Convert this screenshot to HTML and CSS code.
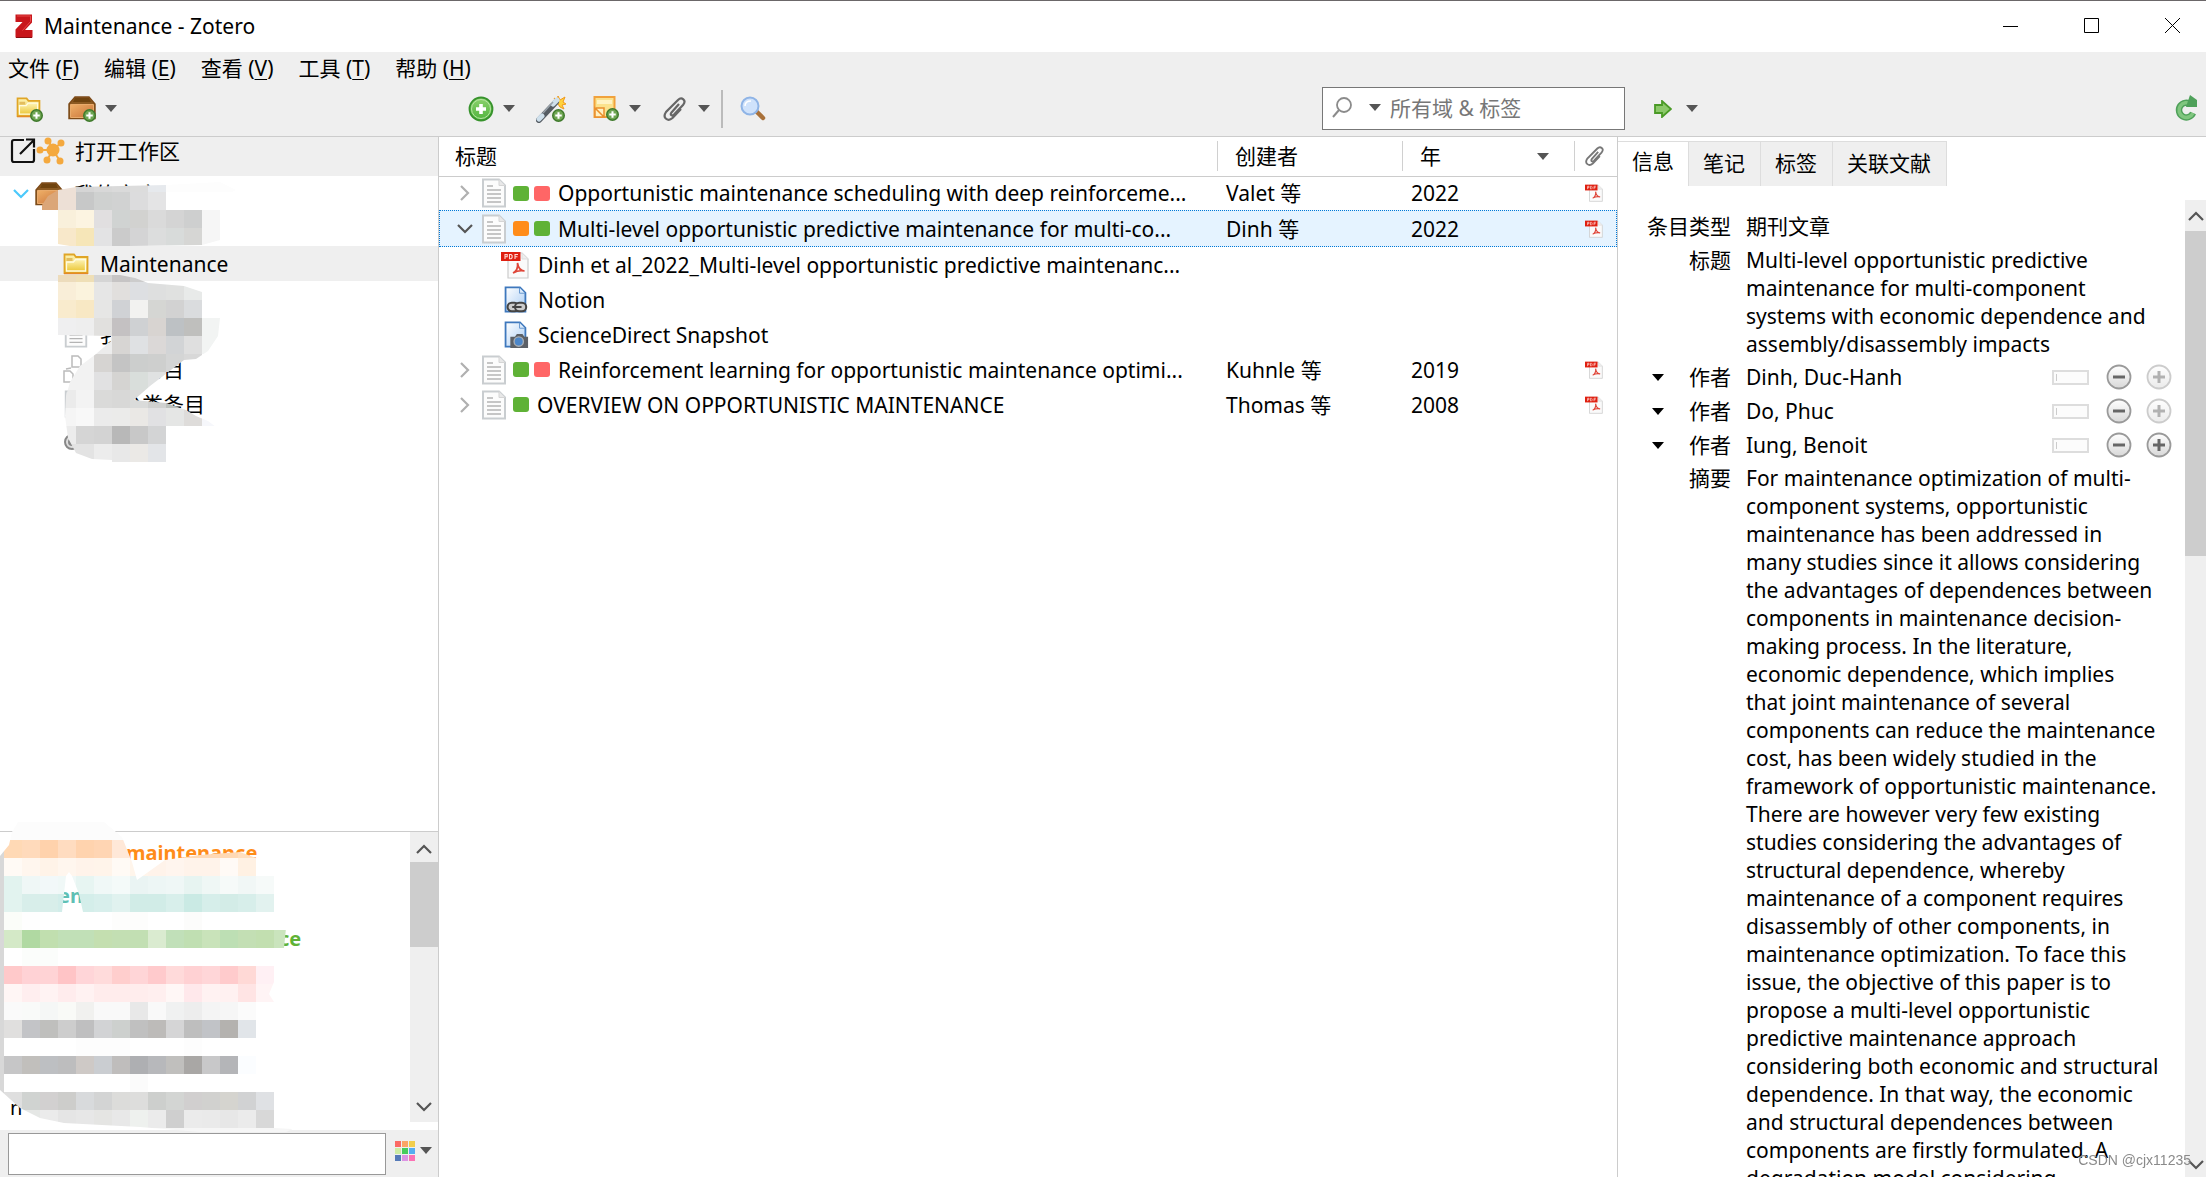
FILE: index.html
```html
<!DOCTYPE html>
<html lang="zh-CN">
<head>
<meta charset="utf-8">
<title>Maintenance - Zotero</title>
<link rel="stylesheet" href="styles.css">
</head>
<body>
<svg class="defs" aria-hidden="true">
  <defs>
    <linearGradient id="gold" x1="0" y1="0" x2="0" y2="1"><stop offset="0" stop-color="#fdf3b4"/><stop offset="1" stop-color="#ecc83a"/></linearGradient>
    <linearGradient id="wood" x1="0" y1="0" x2="1" y2="1"><stop offset="0" stop-color="#efb068"/><stop offset="1" stop-color="#c9733a"/></linearGradient>
    <linearGradient id="leaf" x1="0" y1="0" x2="0" y2="1"><stop offset="0" stop-color="#8ed36f"/><stop offset="1" stop-color="#4fb33c"/></linearGradient>
    <linearGradient id="knob" x1="0" y1="0" x2="0" y2="1"><stop offset="0" stop-color="#fff"/><stop offset="1" stop-color="#d8d8d8"/></linearGradient>
    <linearGradient id="sky" x1="0" y1="0" x2="1" y2="1"><stop offset="0" stop-color="#fff"/><stop offset="1" stop-color="#a9cdf5"/></linearGradient>
    <symbol id="badge" viewBox="0 0 12 12"><circle cx="6" cy="6" r="5.3" fill="#6fa653" stroke="#3f7a2c" stroke-width="1.4"/><path d="M6 3v6M3 6h6" stroke="#fff" stroke-width="1.9"/></symbol>
    <symbol id="folder" viewBox="0 0 26 22"><path d="M1.5 20V1.500H11l2 2.500h11.500V20z" fill="url(#gold)" stroke="#e0a526" stroke-width="1.800"/><path d="M3.500 18V9h7l2-2.500h10V18z" fill="url(#gold)" stroke="#fffbe0" stroke-width="1.300"/><path d="M3.500 5h6v3h-6z" fill="#e3bd5e"/><path d="M1 20.500h24" stroke="#e58a25" stroke-width="1.500"/></symbol>
    <symbol id="box" viewBox="0 0 28 24"><path d="M1 8 7 1h14l6 7v14.500H1z" fill="#8c5a22" stroke="#7c4a18" stroke-width="1.400"/><path d="M7 2h14l2 4H5z" fill="#6f430f"/><path d="M2.500 8.500h23v13h-23z" fill="url(#wood)" stroke="#e9ab6c"/></symbol>
    <symbol id="caret" viewBox="0 0 12 7"><path d="M0 0h12L6 7z" fill="currentColor"/></symbol>
    <symbol id="chev" viewBox="0 0 16 10"><path d="M1 1l7 7 7-7" fill="none" stroke="currentColor" stroke-width="2.200"/></symbol>
    <symbol id="clip" viewBox="0 0 24 26"><path d="M17 8 9.500 16.500c-2 2.500.5 4 2.500 2L21 9c4-5-1.500-8.500-5-5L4 16c-4 6 2 10 6.500 6L19 13" fill="none" stroke="currentColor" stroke-width="2.200"/></symbol>
    <symbol id="page" viewBox="0 0 26 30"><path d="M2 1.500h16l6 6v21H2z" fill="#fcfcfc" stroke="#c9cdd0" stroke-width="2"/><path d="M18 1.500v6h6" fill="#e8e8e8" stroke="#d5d5d5"/><path d="M6 8h6M6 12h14M6 16h14M6 20h14M6 24h14" stroke="#b4b4b4" stroke-width="1.500"/></symbol>
    <symbol id="pdf" viewBox="0 0 28 28"><path d="M7 2h14l6 6v19H7z" fill="#fafafa" stroke="#ccc" stroke-width="1.200"/><path d="M21 2v6h6" fill="#eee" stroke="#ddd"/><path d="M12 22c4-2 5-6 4.500-10 1 6 3 8 7 8-4-1-8 0-11.500 2z" fill="none" stroke="#df4538" stroke-width="1.700"/><path d="M0 1h19.500v9H0z" fill="#df1f10"/><path d="M4 8V3.500h2.200v2.300H4M8.500 3.500v4.200h1.600l1-1V4.500l-1-1zM14 8V3.500h3M14 5.700h2.500" fill="none" stroke="#ffd9d4" stroke-width="1.100"/></symbol>
    <symbol id="bluepage" viewBox="0 0 26 30"><path d="M1.500 1.500h16l6 6v21h-22z" fill="url(#sky)" stroke="#3e78bd" stroke-width="2"/><path d="M17 2v6h6" fill="#dcebfb" stroke="#5b8fca"/></symbol>
    <symbol id="minus" viewBox="0 0 26 26"><circle cx="13" cy="13" r="11.500" fill="url(#knob)" stroke="#9a9a9a" stroke-width="1.800"/><path d="M7 13h12" stroke="#666" stroke-width="3"/></symbol>
    <symbol id="plus" viewBox="0 0 26 26"><circle cx="13" cy="13" r="11.500" fill="url(#knob)" stroke="#9a9a9a" stroke-width="1.800"/><path d="M7 13h12M13 7v12" stroke="#666" stroke-width="3"/></symbol>
  </defs>
</svg>

<header class="titlebar">
  <svg class="logo" viewBox="0 0 18 24"><path d="M.5.500h16.500v8L10 16h7.500v7.500H.5v-8L7.500 8h-7z" fill="#c8161b"/><path d="M2 2h13.500v5.500L7.500 16.500" fill="none" stroke="#e64848"/><path d="M1 23.500h16" stroke="#8a0d10"/></svg>
  <h1>Maintenance - Zotero</h1>
  <div class="window-buttons">
    <button aria-label="最小化"><svg width="16" height="16"><path d="M0 8.500h15" stroke="#000"/></svg></button>
    <button aria-label="最大化"><svg width="16" height="16"><path d="M.5.5h14v14H.5z" fill="none" stroke="#000"/></svg></button>
    <button aria-label="关闭"><svg width="16" height="16"><path d="M0 0l15 15M15 0L0 15" stroke="#000"/></svg></button>
  </div>
</header>

<nav class="menubar">
  <button>文件 (<u>F</u>)</button><button>编辑 (<u>E</u>)</button><button>查看 (<u>V</u>)</button><button>工具 (<u>T</u>)</button><button>帮助 (<u>H</u>)</button>
</nav>

<div class="toolbar">
  <div class="tools tools-left">
    <button aria-label="新建分类"><svg width="28" height="26"><use href="#folder" y="1" width="25" height="21"/><use href="#badge" x="14" y="13" width="13" height="13"/></svg></button>
    <button aria-label="新建文库"><svg width="28" height="26"><use href="#box" width="28" height="24"/><use href="#badge" x="15" y="13" width="13" height="13"/></svg><svg class="caret"><use href="#caret"/></svg></button>
  </div>
  <div class="tools tools-center">
    <button aria-label="新建条目"><svg width="26" height="26" viewBox="0 0 26 26"><circle cx="13" cy="13" r="11.500" fill="url(#leaf)" stroke="#37932c" stroke-width="1.800"/><circle cx="13" cy="13" r="9.500" fill="none" stroke="#b7e6a4"/><path d="M13 8v10M8 13h10" stroke="#fff" stroke-width="3.600"/></svg><svg class="caret"><use href="#caret"/></svg></button>
    <button aria-label="通过标识符添加"><svg width="30" height="28" viewBox="0 0 30 28"><path d="m18 3 3 2 1-4 2 4 5-3-2 5 3 2-4 1 2 4-4-2z" fill="#ffd23c" stroke="#f09a1c"/><path d="M3 25 20 7" stroke="#555c63" stroke-width="6" stroke-linecap="round"/><path d="M3 24 6 21M17 9l4-4" stroke="#cfe0ec" stroke-width="5" stroke-linecap="round"/><path d="M7 18 17 7" stroke="#99a2aa" stroke-width="1.500"/><use href="#badge" x="16" y="14" width="13" height="13"/></svg></button>
    <button aria-label="新建笔记"><svg width="27" height="27" viewBox="0 0 27 27"><path d="M1.500 2h20v20h-20z" fill="#fbe28d" stroke="#f1a23c" stroke-width="2"/><path d="M4 5h15v4H4z" fill="#fff3c4"/><path d="M2 13l9 9H2zM3 13h8v9" fill="#fff1c2" stroke="#ea8f2c" stroke-width="1.500"/><use href="#badge" x="13" y="13" width="13" height="13"/></svg><svg class="caret"><use href="#caret"/></svg></button>
    <button aria-label="添加附件" class="grey"><svg width="24" height="26"><use href="#clip"/></svg><svg class="caret"><use href="#caret"/></svg></button>
    <span class="divider"></span>
    <button aria-label="高级搜索"><svg width="26" height="26" viewBox="0 0 26 26"><path d="m16 15 7 7" stroke="#a9713a" stroke-width="4.500" stroke-linecap="round"/><circle cx="10" cy="10" r="8.500" fill="#cfe2fb" stroke="#8fb4e6" stroke-width="2"/><path d="M5 10c0-4 3-5 6-5" fill="none" stroke="#fff" stroke-width="1.500"/></svg></button>
    <label class="search"><svg width="20" height="22" viewBox="0 0 20 22"><circle cx="12" cy="8" r="7" fill="none" stroke="#8b8b8b" stroke-width="1.800"/><path d="m7 13-6 7" stroke="#8b8b8b" stroke-width="2"/></svg><svg class="caret"><use href="#caret"/></svg><input type="text" placeholder="所有域 &amp; 标签" aria-label="搜索"></label>
  </div>
  <div class="tools tools-right">
    <button aria-label="定位"><svg width="18" height="18" viewBox="0 0 18 18"><path d="M1 5h7V1l9 8-9 8v-4H1z" fill="#8cc96a" stroke="#4a9a26" stroke-width="1.800"/></svg><svg class="caret"><use href="#caret"/></svg></button>
    <button aria-label="同步"><svg width="24" height="28" viewBox="0 0 24 28"><path d="M17 9.500A7.300 7.300 0 1 0 19 18" fill="none" stroke="#4fa15a" stroke-width="6.500"/><path d="M17 9.500A7.300 7.300 0 1 0 19 18" fill="none" stroke="#80c67f" stroke-width="3.500"/><path d="M16 0l7 5v7H12z" fill="#4fa15a"/></svg></button>
  </div>
</div>

<main class="panes">
  <aside class="left">
    <a class="workspace" href="#"><svg width="56" height="28" viewBox="0 0 56 28"><path d="M14 3H4a2 2 0 0 0-2 2v18a2 2 0 0 0 2 2h18a2 2 0 0 0 2-2V12M10 17 24 3M16 2.500h8v8" fill="none" stroke="#111" stroke-width="2.200"/><g stroke="#f4a93f" stroke-width="2" fill="#f4a93f"><path d="M43 13 38 3M43 13l9-8M43 13H31M43 13l-6 10M43 13l7 11"/><circle cx="43" cy="13" r="5.500"/><circle cx="38" cy="4" r="2.500"/><circle cx="51" cy="6" r="2.500"/><circle cx="30" cy="13" r="2.500"/><circle cx="37" cy="23" r="2.500"/><circle cx="50" cy="24" r="2.500"/></g></svg>打开工作区</a>
    <ul class="tree">
      <li class="library"><svg class="chev cyan"><use href="#chev"/></svg><svg width="28" height="24"><use href="#box"/></svg>我的文库</li>
      <li></li>
      <li class="current"><svg width="26" height="22"><use href="#folder"/></svg>Maintenance</li>
      <li></li>
      <li><svg width="26" height="28"><use href="#page"/></svg>我的出版物</li>
      <li><svg width="26" height="28" viewBox="0 0 26 28" fill="#fff" stroke="#bbb" stroke-width="1.500"><path d="M9 1h6l3 3v8H9zM1 16h6l3 3v8H1zM3 14l5-1"/></svg>重复条目</li>
      <li><svg width="26" height="28"><use href="#page"/></svg>未分类条目</li>
      <li class="trash"><svg width="26" height="18" viewBox="0 0 26 18" fill="#ddd" stroke="#888" stroke-width="2"><circle cx="9" cy="8" r="7"/><circle cx="9" cy="8" r="3" fill="#888"/><path d="M13 15h10"/></svg></li>
    </ul>
    <svg class="mosaic tree-mosaic" width="240" height="300" data-mosaic="tree"></svg>
    <section class="tags">
      <div class="tag-list">
        <span class="tag orange">maintenance</span>
        <span class="tag teal">en</span>
        <span class="tag green">ce</span>
        <span class="tag plain">n</span>
        <svg class="mosaic tag-mosaic" width="300" height="314" data-mosaic="tags"></svg>
      </div>
      <div class="scrollbar"><svg class="chev up"><use href="#chev"/></svg><span class="thumb tag-thumb"></span><svg class="chev"><use href="#chev"/></svg></div>
    </section>
    <div class="tag-filter">
      <input type="text" aria-label="筛选标签">
      <button aria-label="标签选项"><svg width="20" height="20" viewBox="0 0 20 20"><path fill="#fb6a64" d="M0 0h6v6H0z"/><path fill="#fba566" d="M7 0h6v6H7z"/><path fill="#f2ce4c" d="M14 0h6v6h-6z"/><path fill="#cdeca4" d="M0 7h6v6H0z"/><path fill="#46cc5c" d="M7 7h6v6H7z"/><path fill="#55adf0" d="M14 7h6v6h-6z"/><path fill="#557ab8" d="M0 14h6v6H0z"/><path fill="#dc94e4" d="M7 14h6v6H7z"/><path fill="#fb72b4" d="M14 14h6v6h-6z"/></svg><svg class="caret"><use href="#caret"/></svg></button>
    </div>
  </aside>

  <section class="items">
    <table>
      <colgroup><col><col class="c-creator"><col class="c-year"><col class="c-clip"></colgroup>
      <thead><tr><th>标题</th><th>创建者</th><th><span class="year-head">年<svg class="caret"><use href="#caret"/></svg></span></th><th class="clip-head" aria-label="附件"><svg width="20" height="22"><use href="#clip"/></svg></th></tr></thead>
      <tbody>
        <tr class="first"><td><div class="cell"><svg class="chev side"><use href="#chev"/></svg><svg class="page"><use href="#page"/></svg><i class="dot g"></i><i class="dot r"></i><span>Opportunistic maintenance scheduling with deep reinforceme...</span></div></td><td>Valet 等</td><td>2022</td><td><svg class="pdf-s"><use href="#pdf"/></svg></td></tr>
        <tr class="selected"><td><div class="cell"><svg class="chev"><use href="#chev"/></svg><svg class="page"><use href="#page"/></svg><i class="dot o"></i><i class="dot g"></i><span>Multi-level opportunistic predictive maintenance for multi-co...</span></div></td><td>Dinh 等</td><td>2022</td><td><svg class="pdf-s"><use href="#pdf"/></svg></td></tr>
        <tr><td><div class="cell child"><svg class="att"><use href="#pdf"/></svg><span>Dinh et al_2022_Multi-level opportunistic predictive maintenanc...</span></div></td><td></td><td></td><td></td></tr>
        <tr><td><div class="cell child"><svg class="att" viewBox="0 0 28 30"><use href="#bluepage" x="2" width="26" height="29"/><g fill="none" stroke="#444" stroke-width="2.200"><rect x="6" y="18" width="12" height="9" rx="4.500" fill="#ccc"/><rect x="14" y="18" width="12" height="9" rx="4.500" fill="#ccc"/><path d="M11 22.500h10"/></g></svg><span>Notion</span></div></td><td></td><td></td><td></td></tr>
        <tr><td><div class="cell child"><svg class="att" viewBox="0 0 28 30"><use href="#bluepage" x="2" width="26" height="29"/><path d="M9 17h5l2-3h6l2 3h4v12H9z" fill="#5c6066"/><circle cx="18" cy="22" r="5" fill="#4c86c8" stroke="#a6adb5" stroke-width="1.500"/></svg><span>ScienceDirect Snapshot</span></div></td><td></td><td></td><td></td></tr>
        <tr><td><div class="cell"><svg class="chev side"><use href="#chev"/></svg><svg class="page"><use href="#page"/></svg><i class="dot g"></i><i class="dot r"></i><span>Reinforcement learning for opportunistic maintenance optimi...</span></div></td><td>Kuhnle 等</td><td>2019</td><td><svg class="pdf-s"><use href="#pdf"/></svg></td></tr>
        <tr><td><div class="cell"><svg class="chev side"><use href="#chev"/></svg><svg class="page"><use href="#page"/></svg><i class="dot g"></i><span>OVERVIEW ON OPPORTUNISTIC MAINTENANCE</span></div></td><td>Thomas 等</td><td>2008</td><td><svg class="pdf-s"><use href="#pdf"/></svg></td></tr>
      </tbody>
    </table>
  </section>

  <aside class="right">
    <div class="tabs" role="tablist">
      <button role="tab" aria-selected="true">信息</button><button role="tab">笔记</button><button role="tab">标签</button><button role="tab">关联文献</button>
    </div>
    <div class="info">
      <dl>
        <dt>条目类型</dt><dd class="type">期刊文章</dd>
        <dt>标题</dt><dd class="title">Multi-level opportunistic predictive<br>maintenance for multi-component<br>systems with economic dependence and<br>assembly/disassembly impacts</dd>
        <dt class="role"><svg class="caret"><use href="#caret"/></svg>作者</dt><dd class="author"><span>Dinh, Duc-Hanh</span><button class="field" aria-label="单栏"></button><button aria-label="删除"><svg><use href="#minus"/></svg></button><button class="faded" aria-label="添加" disabled><svg><use href="#plus"/></svg></button></dd>
        <dt class="role"><svg class="caret"><use href="#caret"/></svg>作者</dt><dd class="author"><span>Do, Phuc</span><button class="field" aria-label="单栏"></button><button aria-label="删除"><svg><use href="#minus"/></svg></button><button class="faded" aria-label="添加" disabled><svg><use href="#plus"/></svg></button></dd>
        <dt class="role"><svg class="caret"><use href="#caret"/></svg>作者</dt><dd class="author"><span>Iung, Benoit</span><button class="field" aria-label="单栏"></button><button aria-label="删除"><svg><use href="#minus"/></svg></button><button aria-label="添加"><svg><use href="#plus"/></svg></button></dd>
        <dt class="abstract">摘要</dt><dd class="abstract">For maintenance optimization of multi-<br>component systems, opportunistic<br>maintenance has been addressed in<br>many studies since it allows considering<br>the advantages of dependences between<br>components in maintenance decision-<br>making process. In the literature,<br>economic dependence, which implies<br>that joint maintenance of several<br>components can reduce the maintenance<br>cost, has been widely studied in the<br>framework of opportunistic maintenance.<br>There are however very few existing<br>studies considering the advantages of<br>structural dependence, whereby<br>maintenance of a component requires<br>disassembly of other components, in<br>maintenance optimization. To face this<br>issue, the objective of this paper is to<br>propose a multi-level opportunistic<br>predictive maintenance approach<br>considering both economic and structural<br>dependence. In that way, the economic<br>and structural dependences between<br>components are firstly formulated. A<br>degradation model considering</dd>
      </dl>
      <div class="scrollbar info-scroll"><svg class="chev up"><use href="#chev"/></svg><span class="thumb info-thumb"></span><svg class="chev"><use href="#chev"/></svg></div>
    </div>
  </aside>
</main>
<div class="watermark">CSDN @cjx11235</div>
<script src="mosaic.js"></script>
</body>
</html>
```
FILE: styles.css
```css
* { box-sizing: border-box; }
html, body { height: 100%; }
body {
  margin: 0;
  display: flex;
  flex-direction: column;
  overflow: hidden;
  background: #fff;
  color: #000;
  font: 21px/28px "Noto Sans", "Noto Sans CJK SC", sans-serif;
}
button, input { font: inherit; color: inherit; }
button { display: flex; align-items: center; margin: 0; padding: 0; border: 0; background: none; }
svg { flex: none; display: block; }
.defs { position: absolute; width: 0; height: 0; }
.caret { width: 12px; height: 7px; color: #555; }
.chev { width: 16px; height: 10px; color: #555; }

.titlebar { display: flex; align-items: center; height: 52px; flex: none; border-top: 1px solid #6b6769; padding: 0 25px 2px 15px; }
.titlebar h1 { margin: 0; font-size: 21px; font-weight: 400; }
.logo { width: 18px; height: 24px; margin-right: 11px; }
.window-buttons { display: flex; gap: 65px; margin-left: auto; }
.window-buttons button { height: 49px; }

.menubar { display: flex; flex: none; gap: 25px; height: 31px; padding-left: 8px; background: #efefef; }
.menubar button { white-space: pre; }
.menubar u { text-underline-offset: 3px; text-decoration-thickness: 1px; }

.toolbar { display: flex; flex: none; height: 54px; padding-bottom: 2px; background: #efefef; border-bottom: 1px solid #ccc; }
.tools { display: flex; align-items: center; }
.tools button { gap: 9px; }
.tools-left { width: 439px; padding-left: 16px; gap: 24px; }
.tools-center { flex: 1; padding-left: 29px; }
.tools-center button { margin-right: 21px; }
.tools-center button:nth-of-type(2) { margin-right: 27px; }
.tools-center button.grey { gap: 12px; color: #666; margin-right: 11px; }
.divider { width: 2px; height: 38px; background: #bbb; margin-right: 17px; }
.search { display: flex; align-items: center; width: 303px; height: 43px; margin-left: auto; border: 1px solid #777; background: #fff; padding: 0 0 2px 9px; }
.search .caret { margin: 0 9px 0 17px; }
.search input { flex: 1; min-width: 0; border: 0; padding: 0; outline: 0; background: none; }
.search input::placeholder { color: #777; opacity: 1; }
.tools-right { width: 581px; padding: 0 8px 0 29px; justify-content: space-between; }
.tools-right button { gap: 14px; }

.panes { display: flex; flex: 1; min-height: 0; }
.left { position: relative; display: flex; flex-direction: column; width: 439px; border-right: 1px solid #ccc; }
.workspace { display: flex; align-items: center; gap: 9px; height: 39px; flex: none; padding: 0 0 11px 10px; background: #efefef; color: #000; text-decoration: none; }
.tree { list-style: none; margin: 0; padding: 0; flex: 1; min-height: 0; }
.tree li { display: flex; align-items: center; gap: 11px; height: 35px; padding-left: 63px; }
.tree .library { padding-left: 13px; gap: 6px; }
.tree .library svg + svg { margin-right: 5px; }
.tree .trash { height: 44px; }
.tree .current { background: #efefef; }
.cyan { color: #4cc9fb; }
.mosaic { position: absolute; left: 0; }
.tree-mosaic { top: 39px; }
.tags { display: flex; flex: none; height: 299px; border-top: 1px solid #ccc; }
.tag-list { position: relative; flex: 1; display: flex; flex-direction: column; padding-top: 7px; }
.tag { height: 28px; margin-bottom: 15px; font-weight: 700; font-size: 20px; }
.orange { color: #ff8c19; padding-left: 126px; }
.teal { color: #5fc0b4; padding-left: 58px; }
.green { color: #5fb236; padding-left: 279px; }
.plain { font-weight: 400; padding-left: 10px; margin-top: auto; margin-bottom: 8px; }
.tag-mosaic { top: -12px; }
.scrollbar { display: flex; flex-direction: column; align-items: center; flex: none; background: #efefef; padding: 12px 0 10px; }
.up { transform: rotate(180deg); }
.thumb { width: 100%; background: #cdcdcd; margin-bottom: auto; }
.tags .scrollbar { width: 28px; height: 290px; }
.tag-thumb { height: 85px; margin-top: 8px; }
.tag-filter { display: flex; align-items: center; flex: none; gap: 9px; height: 47px; padding-left: 8px; background: #efefef; }
.tag-filter input { width: 378px; height: 42px; border: 1px solid #999; background: #fff; }
.tag-filter button { gap: 5px; padding-bottom: 6px; }

.items { flex: 1; min-width: 0; border-right: 1px solid #ccc; overflow: hidden; }
table { width: 100%; table-layout: fixed; border-collapse: collapse; }
.c-creator { width: 185px; }
.c-year { width: 172px; }
.c-clip { width: 42px; }
th { position: relative; height: 39px; padding: 0 0 0 17px; text-align: left; font-weight: 400; border-bottom: 1px solid #ccc; }
th:first-child { padding-left: 16px; }
th + th::before { content: ""; position: absolute; left: -1px; top: 4px; width: 1px; height: 30px; background: #d0d0d0; }
.year-head { display: flex; align-items: center; justify-content: space-between; padding-right: 26px; }
.clip-head { padding-left: 9px; color: #777; }
td { height: 35px; padding: 0 0 0 8px; white-space: nowrap; }
td:first-child { padding-left: 18px; }
td:last-child { padding-left: 10px; }
.first td { height: 34px; }
.selected td { height: 37px; background: #e5f3ff; }
.selected { outline: 1px dotted #0078d7; outline-offset: -1px; }
.cell { display: flex; align-items: center; }
.cell .chev { margin-right: 8px; }
.cell .side { transform: rotate(-90deg); color: #b0b0b0; }
.page { width: 26px; height: 30px; margin-right: 6px; }
.dot { width: 16px; height: 15px; border-radius: 3px; margin-right: 5px; }
.dot + span { margin-left: 3px; }
.g { background: #5fb236; }
.r { background: #ff6666; }
.o { background: #ff8c19; }
.child { padding-left: 44px; gap: 9px; }
.att { width: 28px; height: 28px; }
.pdf-s { width: 18px; height: 18px; }

.right { width: 588px; display: flex; flex-direction: column; flex: none; min-height: 0; }
.tabs { display: flex; padding: 4px 0 0 0; height: 63px; flex: none; }
.tabs button { height: 45px; padding: 0 15px 2px 14px; background: #efefef; border: 1px solid #ddd; border-left: 0; border-bottom: 0; }
.tabs button:first-child { background: #fff; padding: 0 14px 6px; }
.info { display: flex; flex: 1; min-height: 0; overflow: hidden; }
dl { flex: 1; margin: 0; padding-top: 12px; display: grid; grid-template-columns: 113px 1fr; column-gap: 15px; align-content: start; white-space: nowrap; }
dt { text-align: right; }
dd { margin: 0; }
.type { margin-bottom: 6px; }
.title { margin-bottom: 2px; }
.abstract { margin-top: 2px; }
.role { display: flex; align-items: center; justify-content: space-between; padding-left: 34px; height: 34px; }
.role .caret { color: #000; }
.author { display: flex; align-items: center; height: 34px; padding-right: 13px; }
.author span { flex: 1; }
.author button svg { width: 26px; height: 26px; }
.author button + button { margin-left: 14px; }
.author .field { width: 37px; height: 15px; border: 2px solid #ddd; background: linear-gradient(#ccc, #ccc) 2px 2px / 1px 7px no-repeat #fcfcfc; }
.author .field + button { margin-left: 17px; }
.faded { opacity: .5; }
.info-scroll { width: 21px; padding: 11px 0 7px; }
.info-thumb { height: 325px; margin-top: 10px; }
.watermark { position: fixed; right: 15px; bottom: 5px; font: 14px/24px "Liberation Sans", sans-serif; color: #8a8a8a; }
```
FILE: mosaic.js
```js
// Pixelated cover drawn over private names: 18px cells, one colour list per row.
// Outlines after the first either add a separate area or cut a hole.
const covers = {
  tree: {
    x: 58, y: -2, clip: [
      "42,29 48,20 58,14 76,11 166,9 220,6 236,14 220,22 220,64 202,69 130,70 76,71 58,68 58,34 42,34",
      "47,101 58,99 120,99 135,102 148,107 184,110 202,116 202,142 220,142 218,160 208,175 196,183 184,184 150,210 134,224 166,227 186,234 196,240 208,245 220,254 220,262 166,262 166,300 112,300 112,284 92,283 76,277 68,262 65,240 66,220 70,206 80,190 96,178 111,165 111,160 58,159 58,103 47,103"],
    rows: [
      "dba678 ede0d6 d5d5d5 d8d8d8 dadada dcdcdc e6e9ed fdfdfd fdfdfd fdfdfd fdfdfd",
      "dba678 ede0d6 c7c8c8 cfd1d0 d1d2d2 dcdcdd e4e4e5",
      " f9f0db fcf4e1 e1dfe0 d0d3d2 d2d2d0 dadada d4d4d4 cecfcf f6f6f6",
      " f8e8ca f6e6b8 e3e3e4 cbcbcb d4d4d5 dcdddd d8dbda d6d6d4 f6f6f6",
      "", " eddcbc efdfb6 d5d5d5 c6c4c4 cccccc d8d8d8 dddddd",
      " f9eed8 fbf3dd e6e6e6 e1dfdd dddfe2 dedfdf e0e1e0 e8eae9",
      " f9ebcd f8e8c4 e6e6e5 d0d2d5 f2f2f0 d5d6d3 d2d2d2 dadcde",
      " efeff0 eeeeee e1e0de c4c1c2 cfd1d3 d8d4d1 bdc1c4 bfbfbd f2f4f3",
      "f2f2f2 f2f2f2 f0f0f0 ececec d7d5d3 dfe1e3 dbd8d7 d2d4d6 dfdfdf f2f4f3",
      "f2f2f2 f2f2f2 f2f2f2 d6d4d2 c4c4c4 cccecd cecfce d4d5d5 d8d8d8",
      "f2f2f2 f2f2f2 f2f2f2 e1e1e2 d5d4d2 d9dedb e0e2e2",
      "f2f2f2 ebebeb f3f3f3 dadad9 d8d8d7 dadbda d0d1d0 bdc1bd cccdcd",
      "f2f2f2 f5f5f5 f8f8f8 ebebeb ebebea eae8e5 e1e1e3 e5e6e5 dedcda f6f7fb",
      "e8e8e8 ececec d5d5d5 d3d3d3 b8b8b8 c8c8c8 d3d4d5",
      "e8e8e8 e3e3e3 e3e3e3 ececec e8e8e8 ebe9e6 e3e5e8"]
  },
  tags: {
    x: 4, y: 2, clip: [
      "0,36 9,25 12,12 18,2 104,2 122,17 132,42 137,60 165,40 200,35 240,32 256,38 274,56 274,108 286,108 284,128 274,130 274,162 269,174 274,182 256,200 256,272 274,272 274,308 293,309 286,312 200,312 140,307 64,303 40,298 20,288 0,270",
      "62,92 66,56 69,52 72,56 79,74 83,92"],
    rows: [
      "fcfcfc fcfcfc fcfcfc fcfcfc fcfcfc fcfcfc fcfcfc fcfcfc",
      "ffd9b5 ffdabb ffd2ac ffdcc0 ffd3ae ffd5b3 ffe8d8 ffe9da ffe9da ffd9b5 ffd9b5 ffd9b5 ffd9b5 ffdfc0",
      "fffaf5 fff6ee fff3e8 fff6ee fff3ea fff4ea fffaf5 fff5eb fff3ea fff5ee fff3ea fff3ea fffaf6 fff1e3 ffffff",
      "e2f3ef eff7f6 f2f8f9 f0f8f7 e7f5f2 f0f8f7 f4faf9 eaf4f3 edf6f5 eff7f6 e7f4f1 eff7f5 f6faf9 f1f7f6 f6faf9",
      "e2f3ef d8eeea d8eeea d2edea d4eeea d8efec e0f2ef d1ece7 d1ece7 d8efeb caeae4 d6eeea d3ece7 d7eeea e2f2ef",
      "fbfdf9 fefefe ffffff ffffff ffffff ffffff fdfdfc fdfdfc ffffff ffffff fcfcfb",
      "d4e9c7 b0d9a2 c1dfaf c1e0b7 c1e0b7 c4dfb0 c3dfb3 c2dfb3 daebd0 c1e0b9 c0dfb2 c9e3ba bddfb4 c3dfb4 c2dfb0 cae4bd",
      "ffffff fbfdfb fbfdfb",
      "ffc9ca ffd2d5 ffd3d5 ffc4c6 ffd5d8 ffdbdb ffcecd ffd5d7 ffcacc ffdada ffd1d3 ffd6d8 ffcbcc ffd9d6 fff0f4",
      "fff6f5 ffeeef fff3f3 ffeced fff2f2 ffecec ffecec ffeded ffefef fff7f6 ffe8eb fff2f2 fff1f1 ffe4e4 fff4f5",
      "fafafa f9faf9 f5f7f6 f9faf7 f1f1ef f9f9f9 f9f9f9 e8e8e8 f9f9f9 f0f1f1 ededed f4f4f4 f6f6f6 fbfbfb",
      "e0dfde c3c4c7 bfbfbd cdcdcd bfbfc0 d2d3d5 cdd0ce c0c0c0 bdbbb9 d5d5d6 bebebe c1c3c7 b4b2af e1e5e9",
      "ffffff ffffff ffffff ffffff fdfdfd fdfdfd fdfdfd ffffff ffffff ffffff fdfdfd",
      "c6c6c7 c1bfbc bdbfc2 bdbdbe cec9c6 cacdd1 bfbdbc aeafb2 b7b8bb c0bfbd a9a7a5 c8c8c9 b4b5b8 fbfdff",
      "ffffff ffffff ffffff ffffff ffffff ffffff ffffff fbfbfb",
      "dfdfdf d0d3d1 d2d0d0 cdcdcb d8dadc d3d4d4 dcdcda dddddc cdcfcd d3d5d3 d1cfcf d1d1cf d5d4cf d1d2d3 dfe1e4",
      "e5e5e5 e5e7e5 ebebeb e5e5e5 e7e7e7 e5e5e3 e8e8e8 eef1ee ebebeb cfcfcf ebebeb eaeaea e7e7e7 ebebeb d8d8d8",
      "f6f6f6 f6f6f6 f6f6f6 f6f6f6 f6f6f6 f6f6f6 f6f6f6 f6f6f6 f6f6f6 f6f6f6 f6f6f6 f6f6f6 f6f6f6 f6f6f6 f6f6f6 f6f6f6"]
  }
};

document.querySelectorAll("[data-mosaic]").forEach(svg => {
  const name = svg.dataset.mosaic;
  const { x, y, clip, rows } = covers[name];
  let cells = "";
  rows.forEach((row, r) => {
    const start = row.startsWith(" ") || name === "tags" ? 0 : -1;
    row.trim().split(" ").filter(Boolean).forEach((colour, c) => {
      let cx = x + (c + start) * 18;
      let width = 18;
      if (start === -1 && c === 0) { cx = 36; width = 22; }
      if (name === "tags" && c === 0) { cells += `<rect x="0" y="${y + r * 18}" width="4" height="18" fill="#d8d8d8"/>`; }
      cells += `<rect x="${cx}" y="${y + r * 18}" width="${width}" height="18" fill="#${colour}"/>`;
    });
  });
  const outline = clip.map(points => `M${points}Z`).join("");
  svg.innerHTML = `<clipPath id="cover-${name}"><path clip-rule="evenodd" d="${outline}"/></clipPath><g clip-path="url(#cover-${name})" shape-rendering="crispEdges">${cells}</g>`;
});
```
